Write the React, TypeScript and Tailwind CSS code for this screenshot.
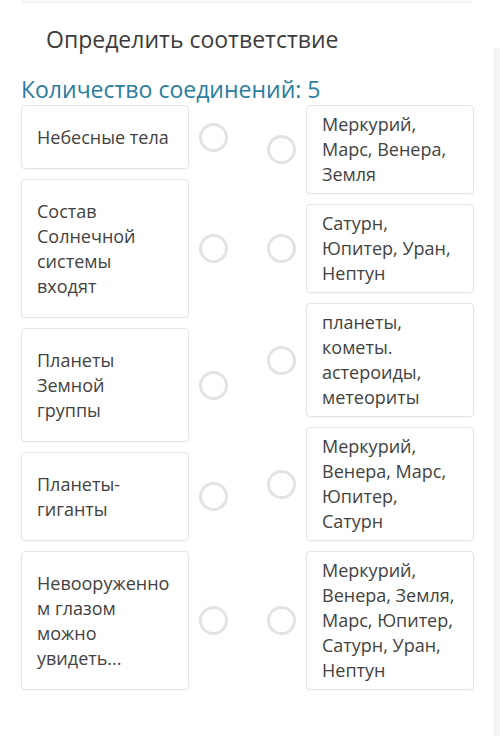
import React from 'react';

const leftItems = [
  ['Небесные тела'],
  ['Состав', 'Солнечной', 'системы', 'входят'],
  ['Планеты', 'Земной', 'группы'],
  ['Планеты-', 'гиганты'],
  ['Невооруженно', 'м глазом', 'можно', 'увидеть...'],
];

const rightItems = [
  ['Меркурий,', 'Марс, Венера,', 'Земля'],
  ['Сатурн,', 'Юпитер, Уран,', 'Нептун'],
  ['планеты,', 'кометы.', 'астероиды,', 'метеориты'],
  ['Меркурий,', 'Венера, Марс,', 'Юпитер,', 'Сатурн'],
  ['Меркурий,', 'Венера, Земля,', 'Марс, Юпитер,', 'Сатурн, Уран,', 'Нептун'],
];

function Dot() {
  return <div className="w-[29px] h-[29px] shrink-0 rounded-full border-[3px] border-[#e3e3e3] bg-white" />;
}

function Lines({ lines }: { lines: string[] }) {
  return (
    <>
      {lines.map((l) => (
        <div key={l} className="whitespace-nowrap">{l}</div>
      ))}
    </>
  );
}

export default function App() {
  return (
    <div className="relative w-[500px] h-[736px] overflow-hidden bg-white font-['Open_Sans',sans-serif]">
      {/* faint edge of the previous block */}
      <div className="mx-[22px] w-[450px] h-[3px] border-b border-[#ececec] bg-[#fafafa]" />
      {/* page scroll strip */}
      <div className="absolute right-0 top-[48px] bottom-0 w-[6px] border-l border-[#ececec] bg-[#f5f5f5]" />

      <h2 className="pl-[46px] mt-[22px] text-[23px] leading-[28px] text-[#3c3c3c]">Определить соответствие</h2>
      <h3 className="pl-[21px] mt-[22px] text-[23px] leading-[28px] text-[#2a7d9f]">Количество соединений: 5</h3>

      <div className="flex pl-[21px] mt-[2px] gap-[39px] text-[18px] leading-[25px] text-[#424242]">
        <div className="flex flex-col gap-[10px]">
          {leftItems.map((t) => (
            <div key={t[0]} className="flex items-center gap-[10px]">
              <div className="w-[168px] rounded-[4px] border border-[#e4e4e4] px-[15px] py-[18.5px] shadow-[0_1px_2px_rgba(0,0,0,0.04)]">
                <Lines lines={t} />
              </div>
              <Dot />
            </div>
          ))}
        </div>
        <div className="flex flex-col gap-[10px]">
          {rightItems.map((t) => (
            <div key={t.join()} className="flex items-center gap-[10px]">
              <Dot />
              <div className="w-[168px] rounded-[4px] border border-[#e4e4e4] pl-[15px] pr-[8px] py-[6px] shadow-[0_1px_2px_rgba(0,0,0,0.04)]">
                <Lines lines={t} />
              </div>
            </div>
          ))}
        </div>
      </div>
    </div>
  );
}
